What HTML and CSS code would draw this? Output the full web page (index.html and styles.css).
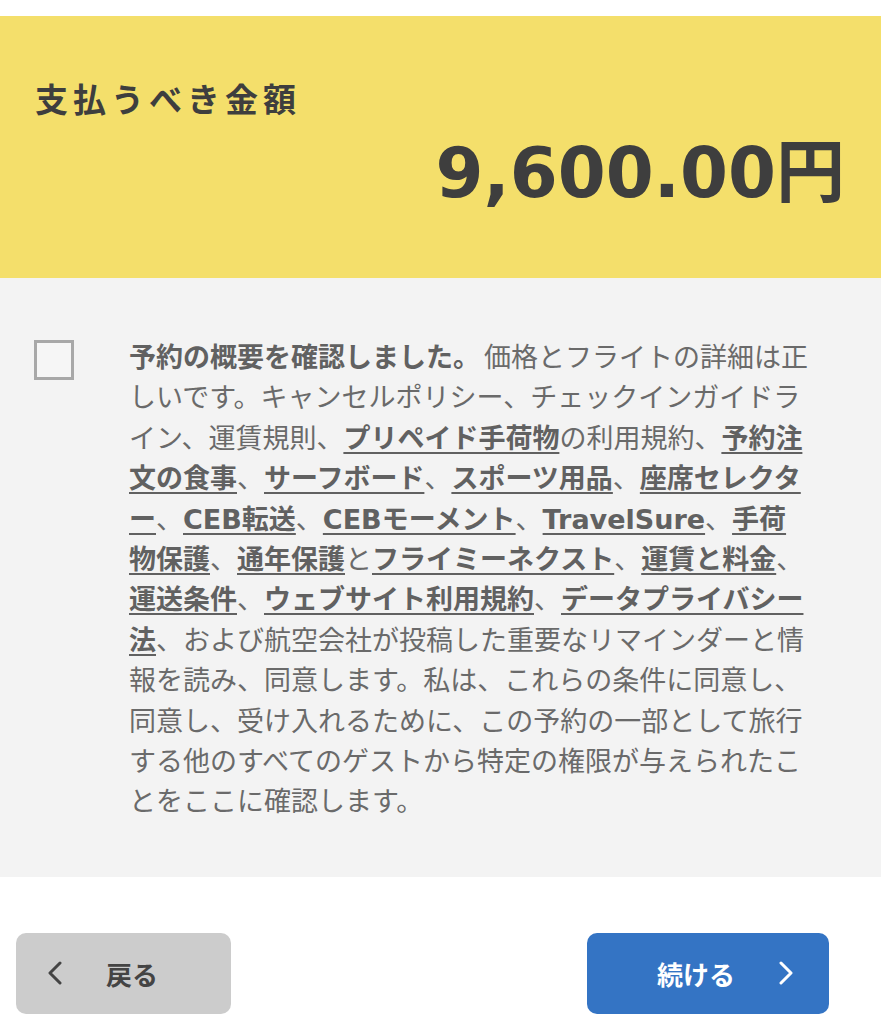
FILE: index.html
```html
<!DOCTYPE html>
<html lang="ja">
<head>
<meta charset="utf-8">
<title>支払うべき金額</title>
<link rel="stylesheet" href="styles.css">
</head>
<body>
<main class="page">
  <section class="total">
    <h2 class="total-label">支払うべき金額</h2>
    <p class="total-amount">9,600.00円</p>
  </section>
  <section class="agree">
    <span class="checkbox" role="checkbox" aria-checked="false"></span>
    <p class="agree-text"><strong class="lead">予約の概要を確認しました。</strong>価格とフライトの詳細は正しいです。キャンセルポリシー、チェックインガイドライン、運賃規則、<a href="#">プリペイド手荷物</a>の利用規約、<a href="#">予約注文の食事</a>、<a href="#">サーフボード</a>、<a href="#">スポーツ用品</a>、<a href="#">座席セレクター</a>、<a href="#">CEB転送</a>、<a href="#">CEBモーメント</a>、<a href="#">TravelSure</a>、<a href="#">手荷物保護</a>、<a href="#">通年保護</a>と<a href="#">フライミーネクスト</a>、<a href="#">運賃と料金</a>、<a href="#">運送条件</a>、<a href="#">ウェブサイト利用規約</a>、<a href="#">データプライバシー法</a>、および航空会社が投稿した重要なリマインダーと情報を読み、同意します。私は、これらの条件に同意し、同意し、受け入れるために、この予約の一部として旅行する他のすべてのゲストから特定の権限が与えられたことをここに確認します。</p>
  </section>
  <nav class="actions">
    <button class="btn btn-back" type="button">
      <svg class="chev" width="16" height="24" viewBox="0 0 16 24"><polyline points="13,2 3,12 13,22" fill="none" stroke="currentColor" stroke-width="3" stroke-linecap="round" stroke-linejoin="round"/></svg>
      <span>戻る</span>
    </button>
    <button class="btn btn-next" type="button">
      <span>続ける</span>
      <svg class="chev" width="16" height="24" viewBox="0 0 16 24"><polyline points="3,2 13,12 3,22" fill="none" stroke="currentColor" stroke-width="3" stroke-linecap="round" stroke-linejoin="round"/></svg>
    </button>
  </nav>
</main>
</body>
</html>
```

FILE: styles.css
```css
* { box-sizing: border-box; }

html, body {
  margin: 0;
  padding: 0;
  background: #ffffff;
}

body {
  font-family: "DejaVu Sans", "Noto Sans CJK JP", sans-serif;
  color: #3f3f3f;
}

.page {
  width: 881px;
  padding-top: 16px;
}

.total {
  background: #f4df6b;
  padding: 62px 36px 70px 35px;
  display: flex;
  flex-direction: column;
  gap: 20px;
}

.total-label {
  margin: 0;
  font-family: "Noto Sans CJK JP", sans-serif;
  font-size: 33px;
  line-height: 40px;
  font-weight: 700;
  letter-spacing: 5px;
  color: #3e3e3e;
}

.total-amount {
  margin: 0;
  text-align: right;
  font-family: "DejaVu Sans", "Noto Sans CJK JP", sans-serif;
  font-size: 69px;
  line-height: 70px;
  font-weight: 700;
  color: #3e3e3e;
}

.agree {
  background: #f3f3f3;
  display: flex;
  align-items: flex-start;
  gap: 55px;
  padding: 60px 0 54px 34px;
}

.checkbox {
  flex: none;
  width: 40px;
  height: 40px;
  margin-top: 2px;
  border: 3px solid #a8a8a8;
  background: #f6f6f6;
}

.agree-text {
  margin: 0;
  width: 681px;
  font-size: 27px;
  line-height: 40.4px;
  color: #6a6a6a;
  line-break: loose;
}

.agree-text strong,
.agree-text a {
  font-weight: 700;
  color: #616161;
}

.agree-text .lead {
  margin-right: 4px;
}

.agree-text a {
  text-decoration: underline;
  text-decoration-thickness: 2px;
  text-underline-offset: 4px;
}

.actions {
  display: flex;
  justify-content: space-between;
  padding: 56px 52px 10px 16px;
}

.btn {
  height: 81px;
  border: none;
  border-radius: 10px;
  display: flex;
  align-items: center;
  font-family: "Noto Sans CJK JP", sans-serif;
  font-size: 26px;
  font-weight: 700;
  cursor: pointer;
}

.btn-back {
  width: 215px;
  background: #cccccc;
  color: #444444;
  padding: 0 0 0 31px;
  gap: 43px;
}

.btn-next {
  width: 242px;
  background: #3474c4;
  color: #ffffff;
  padding: 0 0 0 70px;
  gap: 43px;
}

.chev { flex: none; }
```
